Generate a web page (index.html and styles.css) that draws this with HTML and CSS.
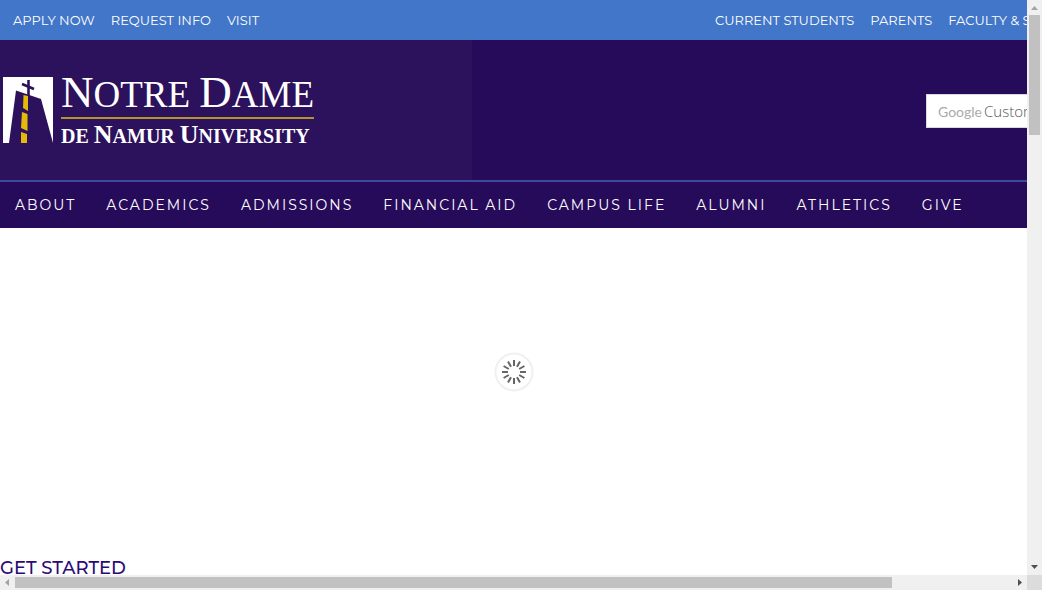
FILE: index.html
```html
<!DOCTYPE html>
<html lang="en">
<head>
<meta charset="utf-8">
<title>Notre Dame de Namur University</title>
<link rel="stylesheet" href="styles.css">
</head>
<body>
<div class="frame">
  <div class="viewport">
    <div class="page">
      <div class="topbar">
        <nav class="links" aria-label="Quick links">
          <a href="#">APPLY NOW</a><a href="#">REQUEST INFO</a><a href="#">VISIT</a>
        </nav>
        <nav class="links audience" aria-label="Audience">
          <a href="#">CURRENT STUDENTS</a><a href="#">PARENTS</a><a href="#">FACULTY &amp; STAFF</a>
        </nav>
      </div>
      <header class="banner">
        <a class="brand" href="#">
          <svg class="mark" viewBox="0 0 50 66" aria-hidden="true">
            <path fill="#fff" d="M0 0h50v66L38 22 13 13.500 6 66H0z"/>
            <path fill="none" stroke="#2c115c" stroke-width="2.600" d="M25.500 3v16M19 7l12 5"/>
            <path fill="#e3b90a" d="M20.500 18l4.500 1v15l-5-3zM19 35l5.500 2v17l-6.500-3zM18 55l6 2v9h-6z"/>
          </svg>
          <span class="wordmark">
            <span class="name"><span class="cap">N</span>OTRE <span class="cap">D</span>AME</span>
            <span class="place">DE <span class="cap">N</span>AMUR <span class="cap">U</span>NIVERSITY</span>
          </span>
        </a>
        <form class="search">
          <label class="search-box"><span class="google">Google</span>
            <input type="text" placeholder="Custom Search" aria-label="Google Custom Search">
          </label>
        </form>
      </header>
      <nav class="mainnav" aria-label="Main">
        <a href="#">ABOUT</a><a href="#">ACADEMICS</a><a href="#">ADMISSIONS</a><a href="#">FINANCIAL AID</a><a href="#">CAMPUS LIFE</a><a href="#">ALUMNI</a><a href="#">ATHLETICS</a><a href="#">GIVE</a>
      </nav>
      <div class="slideshow"></div>
      <h2 class="heading">GET STARTED</h2>
    </div>
    <div class="loader" role="status" aria-label="Loading">
      <svg viewBox="-20 -20 40 40" aria-hidden="true">
        <circle r="18.500" fill="#fff" stroke="#f0f0f0" stroke-width="2"/>
        <g stroke="#666" stroke-width="2">
          <path d="M0-12v6M0 6v6M-12 0h6M6 0h6"/>
          <path transform="rotate(30)" d="M0-12v6M0 6v6M-12 0h6M6 0h6"/>
          <path transform="rotate(60)" d="M0-12v6M0 6v6M-12 0h6M6 0h6"/>
        </g>
      </svg>
    </div>
  </div>
  <div class="scroll vertical">
    <svg class="arrow" viewBox="0 0 15 15"><path fill="#a3a3a3" d="M4 10l3.500-4 3.500 4z"/></svg>
    <div class="track"><div class="thumb"></div></div>
    <svg class="arrow" viewBox="0 0 15 15"><path fill="#505050" d="M4 5l3.500 4L11 5z"/></svg>
  </div>
  <div class="scroll horizontal">
    <svg class="arrow" viewBox="0 0 15 15"><path fill="#a3a3a3" d="M9 4L5 7.500 9 11z"/></svg>
    <div class="track"><div class="thumb"></div></div>
    <svg class="arrow" viewBox="0 0 15 15"><path fill="#505050" d="M6 4l4 3.500L6 11z"/></svg>
  </div>
  <div class="corner"></div>
</div>
</body>
</html>
```
FILE: styles.css
```css
* { box-sizing: border-box; }
body {
  margin: 0;
  font-family: Montserrat, Inter, sans-serif;
  background: #fff;
}
a { color: #fff; text-decoration: none; }

.frame {
  display: grid;
  grid-template: minmax(0, 1fr) 15px / minmax(0, 1fr) 15px;
  height: 100vh;
}
.viewport { position: relative; overflow: hidden; }
.page { min-width: 1170px; }

.topbar {
  display: flex;
  justify-content: space-between;
  align-items: center;
  height: 40px;
  padding-left: 13px;
  background: #4176c8;
}
.links { display: flex; gap: 16px; font-size: 13px; line-height: 20px; }
.audience { width: 455px; }

.banner {
  display: flex;
  justify-content: space-between;
  align-items: center;
  height: 140px;
  background: linear-gradient(to right, #2c115c 472px, #270b5b 472px);
}
.brand { display: flex; gap: 8px; height: 66px; padding-left: 3px; }
.mark { width: 50px; height: 66px; }
.wordmark {
  display: flex;
  flex-direction: column;
  font-family: "Liberation Serif", serif;
  white-space: nowrap;
}
.name {
  flex: none;
  height: 42px;
  border-bottom: 2px solid #b4932a;
  font-size: 37px;
  line-height: 30px;
}
.name .cap { font-size: 45px; }
.place { font-size: 20px; line-height: 32px; font-weight: bold; }
.place .cap { font-size: 26px; }

.search { width: 244px; padding-top: 2px; }
.search-box {
  display: flex;
  align-items: center;
  gap: 4px;
  height: 34px;
  padding-left: 11px;
  border: 1px solid #d9d9d9;
  background: #fff;
}
.google { width: 42px; color: #aaa; font: 14px Lato, sans-serif; }
.search input {
  flex: 1;
  min-width: 0;
  padding: 0;
  border: 0;
  outline: 0;
  background: none;
  font: 300 15px "Open Sans", sans-serif;
}
.search input::placeholder { color: #555; opacity: 1; }

.mainnav {
  display: flex;
  gap: 30px;
  height: 48px;
  padding-left: 15px;
  border-top: 2px solid #3b4a9f;
  background: #270b5b;
  font-size: 14px;
  line-height: 46px;
  letter-spacing: 2px;
}
.slideshow { height: 328px; }
.heading {
  margin: 0;
  color: #2c0a75;
  font-size: 18px;
  font-weight: 500;
  line-height: 24px;
}

.loader {
  position: absolute;
  inset: 0;
  display: grid;
  place-items: center;
  padding-top: 168px;
  pointer-events: none;
}
.loader svg { width: 40px; height: 40px; }

.scroll { display: flex; background: #f0f0f0; }
.vertical { flex-direction: column; padding-left: 2px; }
.vertical .arrow { margin-left: -2px; }
.arrow { width: 15px; height: 15px; flex: none; }
.track { flex: 1; }
.thumb { background: #c1c1c1; }
.vertical .thumb { width: 11px; height: 22%; }
.horizontal .track { padding: 2px 0; }
.horizontal .thumb { width: 88%; height: 11px; }
.corner { background: #dcdcdc; }
```
